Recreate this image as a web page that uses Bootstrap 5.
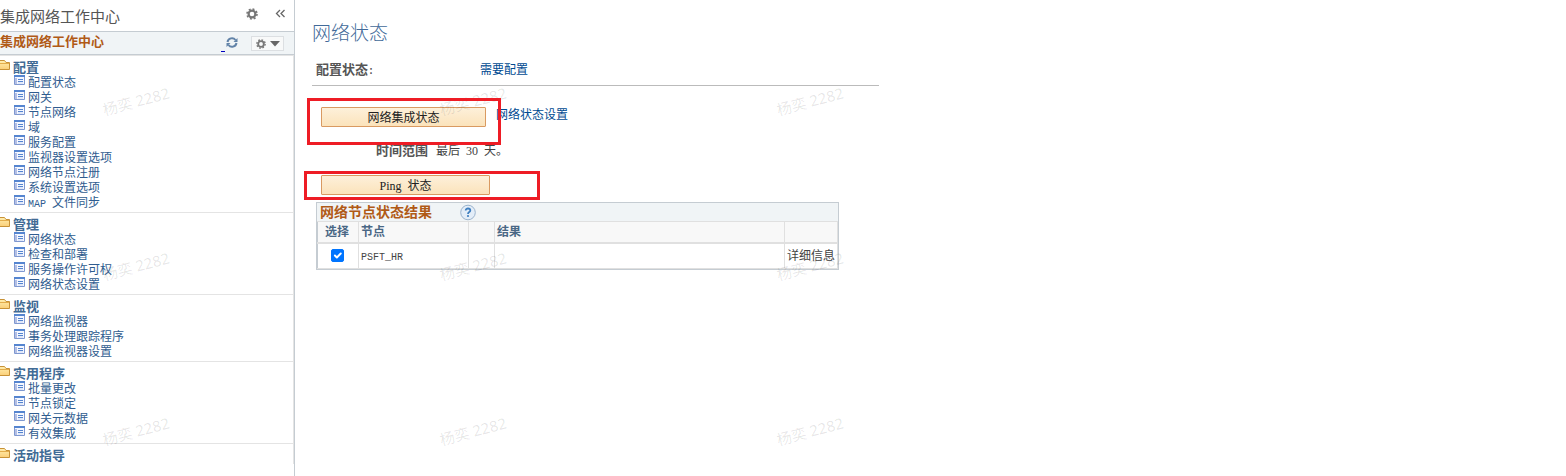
<!DOCTYPE html>
<html lang="zh-CN">
<head>
<meta charset="utf-8">
<meta name="viewport" content="width=device-width, initial-scale=1">
<title>集成网络工作中心</title>
<link href="https://cdn.jsdelivr.net/npm/bootstrap@5.3.0/dist/css/bootstrap.min.css" rel="stylesheet">
<style>
  body { font: 12px/15px "Liberation Sans", "Noto Sans CJK SC", sans-serif; color: #444; background: #fff; }
  a { text-decoration: none; color: #004b91; }
  h1, h2, h3 { margin: 0; font-size: 13px; line-height: 15px; font-weight: 700; }
  .latin { font-family: "Liberation Mono", monospace; font-size: 10px; line-height: 1; }
  .roman { font-family: "Liberation Serif", serif; line-height: 1; white-space: pre; }

  /* Work centre pagelet */
  .side { width: 295px; border-right: 1px solid #c5ccd2; }
  .side-top { height: 32px; border-bottom: 1px solid #c5ccd2; }
  .side-top h1 { font-size: 15px; line-height: 34px; font-weight: 400; color: #555; }
  .side-bar { height: 23px; background: #f0f4f6; border-bottom: 1px solid #c5ccd2; }
  .side-bar h2 { line-height: 20px; color: #b05a17; }
  .plain { border: 0; padding: 0; background: none; line-height: 1; display: block; }
  .blank-link { width: 4px; height: 1px; background: #0000c0; margin-top: 19px; }
  .opt-btn { width: 33px; height: 15px; border: 1px solid #dcdfe2; background: #f8f9f9; padding: 0; margin-right: 10px; }
  .tree { border-top: 1px solid #e4e4e4; border-right: 1px solid #e4e4e4; }
  .tree section { padding: 4px 0 2px; }
  .tree section + section { border-top: 1px solid #e4e4e4; }
  .tree section:last-child { padding-bottom: 1px; }
  .tree h3 { color: #416b95; display: flex; }
  .tree h3 svg { width: 13px; height: 11px; }
  .tree li { display: flex; padding-left: 14px; height: 15px; }
  .tree li svg { width: 11px; height: 10px; margin-right: 3px; flex: none; }
  .tree a { color: #2f5c8f; white-space: nowrap; line-height: 17px; }

  /* Main page */
  .page { padding: 0 17px; }
  .page > * { max-width: 567px; }
  .page h1 { font-size: 19px; line-height: 24px; font-weight: 300; color: #426a99; padding: 22px 0 16px; }
  .field { padding-left: 4px; padding-bottom: 7px; border-bottom: 1px solid #bbb; }
  .field b { width: 164px; font-size: 13px; color: #555; }
  .act { padding-left: 9px; }
  .act-top { padding-top: 21px; }
  .act-top a { margin-left: 10px; line-height: 17px; }
  .act-btn { height: 20px; border: 1px solid #d99a61; border-radius: 1px; padding: 3px 0 0; color: #222;
    background: linear-gradient(#fdf0da, #fbe3bb); line-height: 15px; }
  .w-run { width: 165px; }
  .w-ping { width: 169px; }
  .mark-box { position: absolute; border: 3px solid #ee1c25; pointer-events: none; z-index: 2; }
  .mark-run { left: -14px; top: -9px; width: 194px; height: 47px; }
  .mark-ping { left: -17px; top: -4px; width: 236px; height: 29px; }
  .range b { width: 60px; font-size: 13px; color: #555; }
  .range { padding: 16px 0 16px 64px; }

  .results { max-width: 523px; margin: 7px 0 0 4px; border: 1px solid #c5ccd2; }
  .results h2 { font-size: 14px; line-height: 18px; color: #b05a17; width: 140px; }
  .results-top { height: 18px; background: #f0f4f6; padding-left: 3px; }
  .results table { width: 100%; table-layout: fixed; border-collapse: collapse; }
  .results th, .results td { border: 1px solid #e0e0e0; padding: 2px 2px 0; white-space: nowrap; }
  .results th { height: 21px; background: #f8f8f8; color: #4a6785; border-bottom-width: 2px; }
  .results td { height: 26px; }
  .results tr > :first-child { text-align: center; padding: 2px 3px 0 1px; border-left-color: #c5ccd2; }
  .results .form-check-input { width: 13px; height: 13px; margin: 0 0 2px; border-radius: 2px; vertical-align: middle; border-color: #767676; }
  .results .form-check-input:checked { background-color: #0075ff; border-color: #0075ff; background-size: 13px; }

  /* Viewer stamp laid over the page */
  .stamps { position: absolute; inset: 0; overflow: hidden; pointer-events: none; z-index: 1;
    display: grid; grid-template-columns: repeat(3, 337px); grid-auto-rows: 165px; padding: 91px 0 0 101px; }
  .stamps span { width: 70px; height: 20px; line-height: 20px; font-family: "Noto Sans", "Noto Sans CJK SC", sans-serif;
    font-size: 15px; font-weight: 400; white-space: nowrap; text-align: center; color: rgba(0, 0, 0, .1); transform: rotate(-15deg); }
</style>
</head>
<body>
<svg width="0" height="0" class="position-absolute" aria-hidden="true">
  <defs>
    <linearGradient id="fold" x1="0" y1="0" x2="0" y2="1"><stop offset="0" stop-color="#ffeeb0"/><stop offset="1" stop-color="#fbcf78"/></linearGradient>
    <symbol id="folder" viewBox="0 0 13 11">
      <path d="M-2 .5H4.500L6 2.500H9.500V9.500H-2z" fill="url(#fold)" stroke="#c89237"/>
      <path d="M0 3.500H9" stroke="#e3ad4c"/>
    </symbol>
    <symbol id="page" viewBox="0 0 11 10">
      <path d="M.5 .5h10v9H.5z" fill="#f4f7ff" stroke="#7f98d0"/>
      <path d="M0 0h11v2H0z" fill="#5585d0"/>
      <path d="M1 3h2v6H1z" fill="#b4bfe4"/>
      <path d="M4 4.500h5M4 6.500h5" stroke="#5585d0"/>
      <path d="M4 8h5" stroke="#cdd9f5"/>
    </symbol>
    <symbol id="gear" viewBox="0 0 12 12">
      <circle cx="6" cy="6" r="3.400" fill="none" stroke="#777" stroke-width="2.200"/>
      <circle cx="6" cy="6" r="5" fill="none" stroke="#777" stroke-width="1.600" stroke-dasharray="1.960 1.960"/>
    </symbol>
  </defs>
</svg>

<div class="d-flex min-vh-100 position-relative overflow-hidden">
  <aside class="side flex-shrink-0">
    <header class="side-top d-flex justify-content-between">
      <h1>集成网络工作中心</h1>
      <div class="d-flex gap-3 pe-2 pt-2">
        <button class="plain align-self-start" aria-label="设置"><svg width="12" height="12" class="d-block"><use href="#gear"/></svg></button>
        <button class="plain align-self-start" aria-label="折叠"><svg width="12" height="12" viewBox="0 0 12 12" class="d-block"><path d="M6 2 2.500 5.500 6 9M10.500 2 7 5.500 10.500 9" fill="none" stroke="#666" stroke-width="1.300"/></svg></button>
      </div>
    </header>
    <div class="side-bar d-flex">
      <h2 class="me-auto">集成网络工作中心</h2>
      <a href="#" class="blank-link" aria-label="帮助"></a>
      <button class="plain align-self-start mt-1 me-2 pe-1" aria-label="刷新"><svg width="14" height="13" viewBox="0 0 14 13" class="d-block"><path d="M2.500 6A4.500 4.500 0 0 1 10.500 4M11.500 7A4.500 4.500 0 0 1 3.500 9" fill="none" stroke="#6283a8" stroke-width="2"/><path d="M12.500 2v4H8.500zM1.500 11V7h4z" fill="#6283a8"/></svg></button>
      <button class="opt-btn d-flex align-items-center justify-content-center gap-1 mt-1" aria-label="选项"><svg width="10" height="10" viewBox="0 0 12 12"><use href="#gear"/></svg><svg width="10" height="6" viewBox="0 0 10 6"><path d="M0 0h10L5 5.500z" fill="#666"/></svg></button>
    </div>
    <nav class="tree" aria-label="集成网络工作中心">
      <section>
        <h3><svg><use href="#folder"/></svg>配置</h3>
        <ul class="list-unstyled mb-0">
          <li><svg><use href="#page"/></svg><a href="#">配置状态</a></li>
          <li><svg><use href="#page"/></svg><a href="#">网关</a></li>
          <li><svg><use href="#page"/></svg><a href="#">节点网络</a></li>
          <li><svg><use href="#page"/></svg><a href="#">域</a></li>
          <li><svg><use href="#page"/></svg><a href="#">服务配置</a></li>
          <li><svg><use href="#page"/></svg><a href="#">监视器设置选项</a></li>
          <li><svg><use href="#page"/></svg><a href="#">网络节点注册</a></li>
          <li><svg><use href="#page"/></svg><a href="#">系统设置选项</a></li>
          <li><svg><use href="#page"/></svg><a href="#"><span class="latin">MAP </span>文件同步</a></li>
        </ul>
      </section>
      <section>
        <h3><svg><use href="#folder"/></svg>管理</h3>
        <ul class="list-unstyled mb-0">
          <li><svg><use href="#page"/></svg><a href="#">网络状态</a></li>
          <li><svg><use href="#page"/></svg><a href="#">检查和部署</a></li>
          <li><svg><use href="#page"/></svg><a href="#">服务操作许可权</a></li>
          <li><svg><use href="#page"/></svg><a href="#">网络状态设置</a></li>
        </ul>
      </section>
      <section>
        <h3><svg><use href="#folder"/></svg>监视</h3>
        <ul class="list-unstyled mb-0">
          <li><svg><use href="#page"/></svg><a href="#">网络监视器</a></li>
          <li><svg><use href="#page"/></svg><a href="#">事务处理跟踪程序</a></li>
          <li><svg><use href="#page"/></svg><a href="#">网络监视器设置</a></li>
        </ul>
      </section>
      <section>
        <h3><svg><use href="#folder"/></svg>实用程序</h3>
        <ul class="list-unstyled mb-0">
          <li><svg><use href="#page"/></svg><a href="#">批量更改</a></li>
          <li><svg><use href="#page"/></svg><a href="#">节点锁定</a></li>
          <li><svg><use href="#page"/></svg><a href="#">网关元数据</a></li>
          <li><svg><use href="#page"/></svg><a href="#">有效集成</a></li>
        </ul>
      </section>
      <section>
        <h3><svg><use href="#folder"/></svg>活动指导</h3>
      </section>
    </nav>
  </aside>

  <main class="page flex-grow-1">
    <h1>网络状态</h1>
    <div class="field d-flex align-items-baseline"><b>配置状态<span class="latin">:</span></b><a href="#">需要配置</a></div>
    <div class="act act-top d-flex">
      <div class="position-relative">
        <button class="act-btn w-run d-block">网络集成状态</button>
        <div class="mark-box mark-run"></div>
      </div>
      <a href="#">网络状态设置</a>
    </div>
    <div class="range d-flex align-items-baseline"><b>时间范围</b><span>最后<span class="roman">  30  </span>天。</span></div>
    <div class="act">
      <div class="position-relative">
        <button class="act-btn w-ping d-block"><span class="roman">Ping  </span>状态</button>
        <div class="mark-box mark-ping"></div>
      </div>
    </div>
    <section class="results">
      <div class="results-top d-flex">
        <h2>网络节点状态结果</h2>
        <button class="plain align-self-start" aria-label="帮助"><svg width="16" height="18" viewBox="0 0 16 18" class="d-block"><circle cx="8" cy="9.500" r="7.300" fill="#e3edf8" stroke="#9bb3cd"/><path d="M5.700 7.500C5.700 4.800 10.300 4.900 10.300 7.500 10.300 9.200 8 9 8 11" fill="none" stroke="#3f7fc0" stroke-width="1.800"/><circle cx="8" cy="13" r="1.100" fill="#3f7fc0"/></svg></button>
      </div>
      <table>
        <colgroup><col style="width:41px"><col style="width:110px"><col style="width:26px"><col><col style="width:53px"></colgroup>
        <thead><tr><th scope="col">选择</th><th scope="col">节点</th><th></th><th scope="col">结果</th><th></th></tr></thead>
        <tbody><tr><td><input class="form-check-input" type="checkbox" checked aria-label="选择 PSFT_HR"></td><td><span class="latin">PSFT_HR</span></td><td></td><td></td><td>详细信息</td></tr></tbody>
      </table>
    </section>
  </main>

  <div class="stamps" aria-hidden="true">
    <span>杨奕 2282</span><span>杨奕 2282</span><span>杨奕 2282</span>
    <span>杨奕 2282</span><span>杨奕 2282</span><span>杨奕 2282</span>
    <span>杨奕 2282</span><span>杨奕 2282</span><span>杨奕 2282</span>
  </div>
</div>
<script src="https://cdn.jsdelivr.net/npm/bootstrap@5.3.0/dist/js/bootstrap.bundle.min.js"></script>
</body>
</html>
